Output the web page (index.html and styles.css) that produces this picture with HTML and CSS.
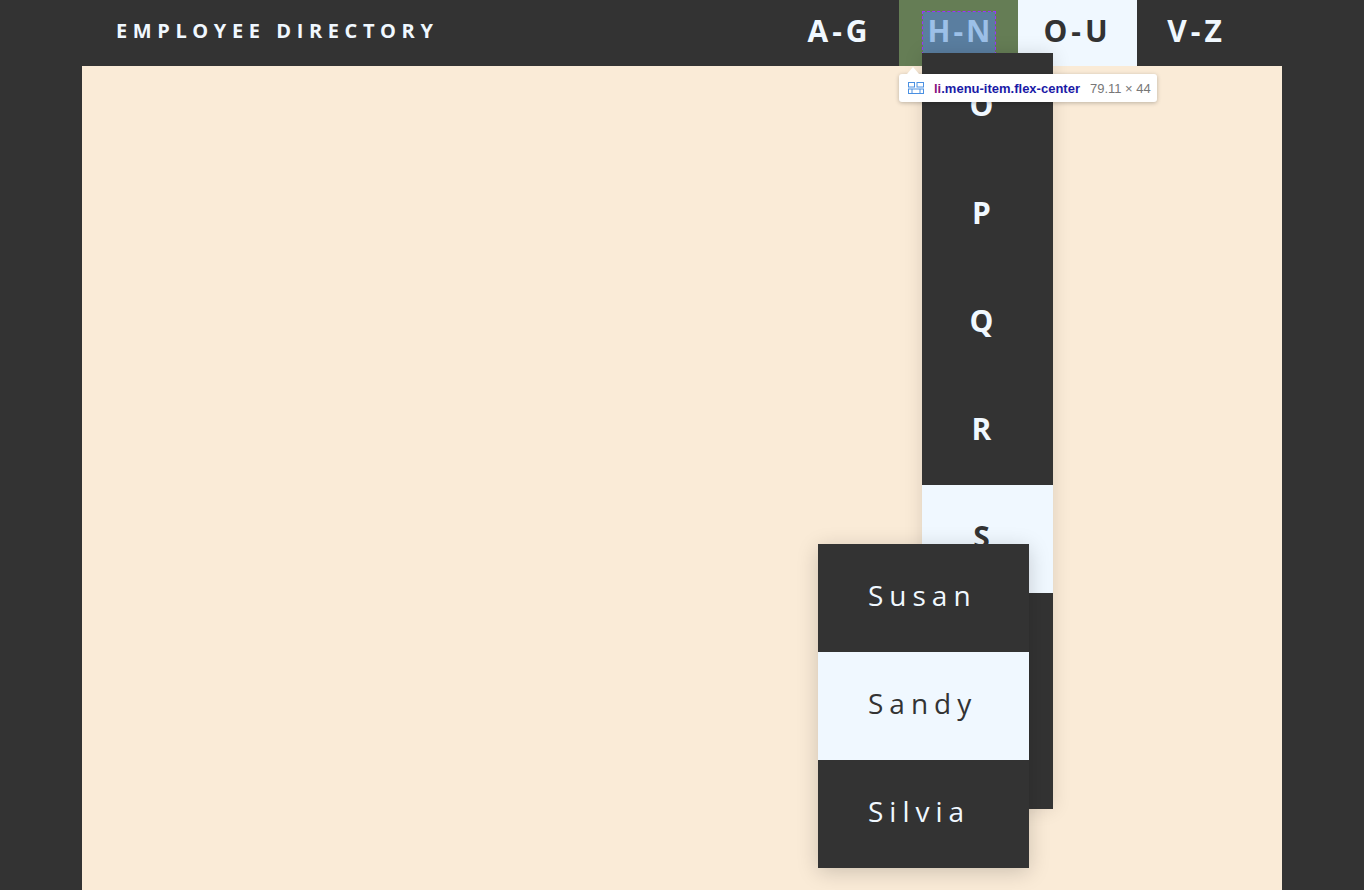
FILE: index.html
```html
<!DOCTYPE html>
<html lang="en">
<head>
<meta charset="utf-8">
<title>Employee Directory</title>
<link rel="stylesheet" href="styles.css">
</head>
<body>
<div class="container">
  <header class="header">
    <h1 class="title">EMPLOYEE DIRECTORY</h1>
    <ul class="menu">
      <li class="menu-item">A-G</li>
      <li class="menu-item inspected"><span class="inspect-content">H-N</span>
        <div class="tooltip">
          <svg class="tip-icon" width="16" height="12" viewBox="0 0 16 12"><rect x="0.5" y="0.5" width="6" height="4.5" fill="none" stroke="#4a90e2"/><rect x="9" y="0.5" width="6.5" height="4.5" fill="none" stroke="#4a90e2"/><rect x="0.5" y="7" width="15" height="4.5" fill="none" stroke="#4a90e2"/><line x1="4" y1="7" x2="4" y2="11.5" stroke="#4a90e2"/><line x1="12" y1="7" x2="12" y2="11.5" stroke="#4a90e2"/></svg>
          <span class="tip-tag">li</span><span class="tip-cls">.menu-item.flex-center</span>
          <span class="tip-size">79.11 × 44</span>
        </div>
      </li>
      <li class="menu-item active">O-U</li>
      <li class="menu-item">V-Z</li>
    </ul>
  </header>
  <main class="content">
    <ul class="dropdown">
      <li class="drop-item">O</li>
      <li class="drop-item">P</li>
      <li class="drop-item">Q</li>
      <li class="drop-item">R</li>
      <li class="drop-item active">S
        <ul class="submenu">
          <li class="sub-item">Susan</li>
          <li class="sub-item active">Sandy</li>
          <li class="sub-item">Silvia</li>
        </ul>
      </li>
      <li class="drop-item">T</li>
      <li class="drop-item">U</li>
    </ul>
  </main>
</div>
</body>
</html>
```
FILE: styles.css
```css
* { box-sizing: border-box; }
html, body { margin: 0; padding: 0; }
body {
  background: #333333;
  font-family: "Open Sans", "DejaVu Sans", sans-serif;
  color: #f0f8ff;
  overflow: hidden;
}
ul { list-style: none; margin: 0; padding: 0; }
.container {
  width: 1200px;
  margin: 0 auto;
}
.header {
  height: 66px;
  display: flex;
  align-items: center;
  padding-left: 34px;
  padding-right: 26px;
}
.title {
  margin: 0 0 6px 0;
  font-size: 20px;
  font-weight: 700;
  letter-spacing: 5.6px;
  color: #f0f8ff;
}
.menu {
  margin-left: auto;
  display: flex;
  height: 66px;
}
.menu-item {
  width: 119px;
  height: 66px;
  display: flex;
  align-items: center;
  justify-content: center;
  padding-bottom: 6px;
  font-size: 30px;
  font-weight: 700;
  letter-spacing: 4px;
  white-space: nowrap;
  color: #f0f8ff;
  position: relative;
}
.menu-item.active {
  background: #f0f8ff;
  color: #333333;
}
.menu-item.inspected {
  background: #657d55;
  padding-bottom: 0;
}
.inspect-content {
  display: flex;
  align-items: center;
  justify-content: center;
  width: 72px;
  height: 42px;
  padding-bottom: 6px;
  padding-left: 4px;
  background: #5a7ea0;
  outline: 1px dashed #9b30ff;
  color: #9cc0e8;
  letter-spacing: 3px;
  white-space: nowrap;
}
.tooltip {
  position: absolute;
  left: 0;
  top: 74px;
  width: 258px;
  height: 28px;
  background: #ffffff;
  border-radius: 3px;
  box-shadow: 0 1px 4px rgba(0,0,0,0.25);
  display: flex;
  align-items: center;
  padding-left: 9px;
  font-family: "Liberation Sans", Arial, sans-serif;
  font-size: 13px;
  letter-spacing: 0;
  z-index: 10;
}
.tooltip::before {
  content: "";
  position: absolute;
  left: 8px;
  top: -7px;
  border-left: 6px solid transparent;
  border-right: 6px solid transparent;
  border-bottom: 7px solid #ffffff;
}
.tip-icon { margin-right: 10px; }
.tip-tag { color: #881280; font-weight: 700; }
.tip-cls { color: #1a1aa6; font-weight: 700; }
.tip-size { color: #777777; font-weight: 400; margin-left: 10px; }
.content {
  background: #faebd7;
  height: calc(100vh - 66px);
  position: relative;
}
.dropdown {
  position: absolute;
  left: 840px;
  top: -13px;
  width: 131px;
  background: #333333;
  box-shadow: 0 0 18px rgba(0,0,0,0.12);
  z-index: 5;
}
.drop-item {
  height: 108px;
  display: flex;
  align-items: center;
  justify-content: center;
  padding-bottom: 6px;
  font-size: 30px;
  font-weight: 700;
  letter-spacing: 12px;
  color: #f0f8ff;
  position: relative;
}
.drop-item.active {
  background: #f0f8ff;
  color: #333333;
}
.submenu {
  position: absolute;
  left: -104px;
  top: 59px;
  width: 211px;
  background: #333333;
  box-shadow: 0 4px 20px rgba(0,0,0,0.18);
  z-index: 6;
}
.sub-item {
  height: 108px;
  display: flex;
  align-items: center;
  padding-left: 50px;
  padding-bottom: 6px;
  font-size: 28px;
  font-weight: 400;
  letter-spacing: 6px;
  color: #f0f8ff;
}
.sub-item.active {
  background: #f0f8ff;
  color: #333333;
}
```
